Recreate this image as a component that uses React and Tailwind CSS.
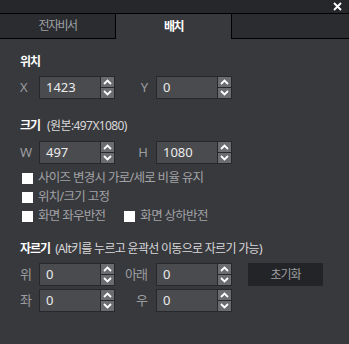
import React from "react";

const FONT = "font-['Noto_Sans','Noto_Sans_CJK_KR',sans-serif]";

const Up = () => (
  <svg width="9" height="6" viewBox="0 0 9 6">
    <path d="M1 5 L4.5 1.5 L8 5" fill="none" stroke="#fff" strokeWidth="1.8" />
  </svg>
);

const Down = () => (
  <svg width="9" height="6" viewBox="0 0 9 6">
    <path d="M1 1 L4.5 4.5 L8 1" fill="none" stroke="#fff" strokeWidth="1.8" />
  </svg>
);

// 숫자 입력 + 스핀 버튼
const Spin = ({ value }) => (
  <div className="flex w-[76px] h-[23px] bg-[#27282b] p-px gap-px">
    <div className="flex-1 bg-[#4a4b4f] pl-[6px] flex items-center text-[13px] text-[#ececec]">{value}</div>
    <div className="w-[13px] flex flex-col gap-px">
      <div className="flex-1 bg-[#6b6c6f] flex items-center justify-center"><Up /></div>
      <div className="flex-1 bg-[#6b6c6f] flex items-center justify-center"><Down /></div>
    </div>
  </div>
);

const Row = ({ a, av, b, bv, children }) => (
  <div className="flex items-center h-[23px]">
    <span className="w-[19px] text-[13px] text-[#9c9da0]">{a}</span>
    <Spin value={av} />
    <span className="w-[41px] pr-[9px] text-right text-[13px] text-[#9c9da0] tracking-[-1px]">{b}</span>
    <Spin value={bv} />
    {children}
  </div>
);

const Check = ({ label }) => (
  <span className="flex items-center">
    <span className="w-[11px] h-[11px] bg-white mr-[5px]"></span>
    <span className="text-[12.5px] text-[#a2a3a6] tracking-[-0.7px] whitespace-pre">{label}</span>
  </span>
);

export default function App() {
  return (
    <div className={`w-[349px] h-[344px] bg-[#38393d] ${FONT} leading-none select-none`}>
      <div className="h-[13px] bg-[#25272a] flex justify-end items-start pt-[2px] pr-[7px]">
        <svg width="9" height="9" viewBox="0 0 9 9">
          <path d="M1 1 L8 8 M8 1 L1 8" stroke="#fff" strokeWidth="1.8" />
        </svg>
      </div>
      <div className="flex h-[26px] border-t border-black">
        <div className="w-[115px] bg-[#2a2c30] border-b border-black flex items-center justify-center text-[12px] text-[#9fa1a4] tracking-[-1.5px]">전자비서</div>
        <div className="w-[117px] border-x border-black flex items-center justify-center text-[12px] font-bold text-white tracking-[-1.5px]">배치</div>
        <div className="flex-1 bg-[#2a2c30] border-b border-black"></div>
      </div>

      <div className="pl-[20px]">
        <div className="mt-[15px] h-[16px] flex items-center text-[12px] font-bold text-white tracking-[-1px]">위치</div>
        <div className="mt-[6px]">
          <Row a="X" av="1423" b="Y" bv="0" />
        </div>

        <div className="mt-[19px] h-[16px] flex items-center text-white">
          <span className="text-[12px] font-bold tracking-[-1px]">크기</span>
          <span className="ml-[7px] text-[12px] text-[#d8d8da] tracking-[-0.6px]">(원본:497X1080)</span>
        </div>
        <div className="mt-[7px]">
          <Row a="W" av="497" b="H" bv="1080" />
        </div>

        <div className="mt-[5px] pl-[2px] flex flex-col">
          <div className="h-[19px] flex items-center"><Check label="사이즈 변경시 가로/세로 비율 유지" /></div>
          <div className="h-[19px] flex items-center"><Check label="위치/크기 고정" /></div>
          <div className="h-[19px] flex items-center gap-[19px]">
            <Check label="화면 좌우반전" />
            <Check label="화면 상하반전" />
          </div>
        </div>

        <div className="mt-[15px] h-[16px] flex items-center text-white">
          <span className="text-[12px] font-bold tracking-[-1px]">자르기</span>
          <span className="ml-[5px] text-[12px] text-[#d8d8da] tracking-[-0.7px] whitespace-pre">(Alt키를 누르고 윤곽선 이동으로 자르기 가능)</span>
        </div>
        <div className="mt-[6px] flex flex-col gap-[3px]">
          <Row a="위" av="0" b="아래" bv="0">
            <button className="ml-[16px] w-[75px] h-[23px] bg-[#232427] text-[12px] text-[#9c9da0] tracking-[-1px]">초기화</button>
          </Row>
          <Row a="좌" av="0" b="우" bv="0" />
        </div>
      </div>
    </div>
  );
}
